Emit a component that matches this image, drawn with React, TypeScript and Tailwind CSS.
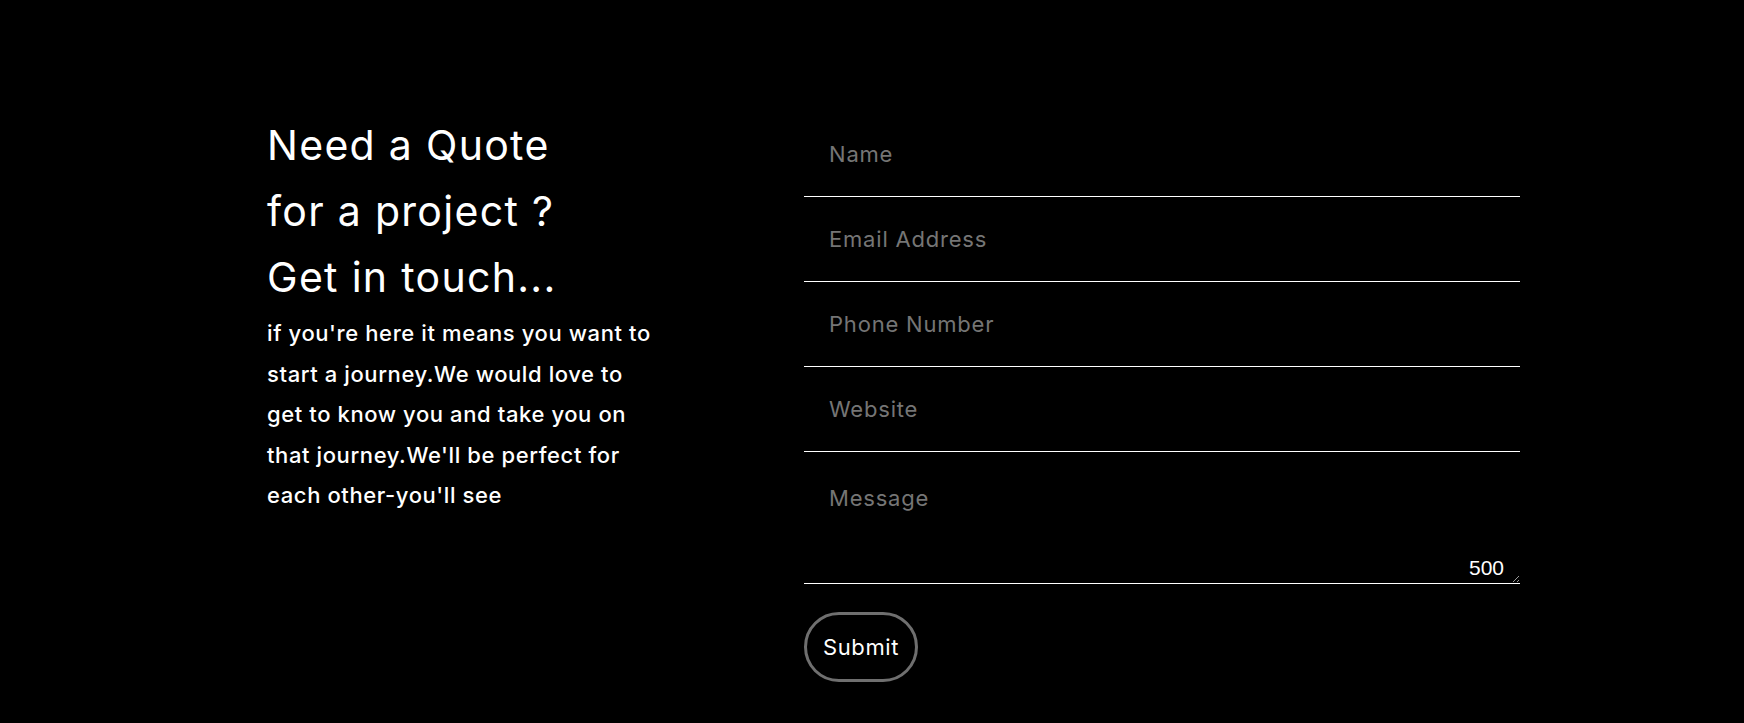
import React from "react";

export default function App() {
  const font = { fontFamily: 'Inter, "Open Sans", sans-serif' };
  return (
    <div className="relative min-h-[723px] w-full bg-black text-white" style={font}>
      <div className="flex pl-[267px] pt-[112px]">
        <div className="w-[537px] shrink-0">
          <h2 className="text-[41px] leading-[66px] font-normal tracking-[1.3px]">
            Need a Quote
            <br />
            for a project ?
            <br />
            Get in touch...
          </h2>
          <p className="mt-[3px] text-[22px] font-medium leading-[40.5px] tracking-[0.6px]">
            if you're here it means you want to
            <br />
            start a journey.We would love to
            <br />
            get to know you and take you on
            <br />
            that journey.We'll be perfect for
            <br />
            each other-you'll see
          </p>
        </div>
        <form className="w-[716px] shrink-0" onSubmit={(e) => e.preventDefault()}>
          {["Name", "Email Address", "Phone Number", "Website"].map((p) => (
            <input
              key={p}
              placeholder={p}
              className="block h-[85px] w-full border-b border-white bg-transparent px-[25px] text-[22px] tracking-[0.8px] text-white outline-none placeholder:text-[#757575]"
            />
          ))}
          <div className="relative">
            <textarea
              placeholder="Message"
              className="block h-[132px] w-full border-b border-white bg-transparent px-[25px] pt-[31px] text-[22px] leading-[30px] tracking-[0.8px] text-white outline-none placeholder:text-[#757575]"
            />
            <span
              className="pointer-events-none absolute bottom-[6px] right-[16px] text-[21px] leading-none text-white"
              style={{ fontFamily: '"Liberation Sans", Arial, sans-serif' }}
            >
              500
            </span>
          </div>
          <button
            type="submit"
            className="mt-[28px] h-[70px] w-[114px] rounded-full border-[3px] border-[#6f6f6f] text-[22px] tracking-[0.6px] text-white"
          >
            Submit
          </button>
        </form>
      </div>
    </div>
  );
}
